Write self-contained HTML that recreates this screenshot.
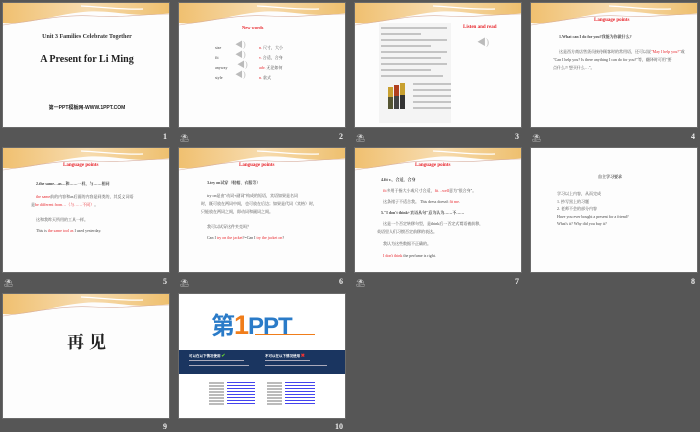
<!DOCTYPE html>
<html><head><meta charset="utf-8"><style>
*{margin:0;padding:0;box-sizing:border-box}
body{width:700px;height:432px;background:#565656;position:relative;overflow:hidden;font-family:"Liberation Serif","Noto Serif CJK SC",serif}
.s{position:absolute;width:168px;height:126px;background:#fdfdfd;overflow:hidden;border:1px solid #6a6a6a}
.s svg.w{position:absolute;left:0;top:0}
.n{position:absolute;color:#eee;font:bold 8px "Liberation Serif",serif}
.st{position:absolute;color:#ccc;font:7px "Noto Sans CJK SC",sans-serif}
.a{position:absolute;white-space:nowrap}
.r{color:#e8252b}
.t{font-size:4px;color:#444}
.ln{position:absolute;height:2px;background:#c4c4c4}
</style></head><body>
<svg width="0" height="0" style="position:absolute"><defs>
<linearGradient id="g" x1="0" x2="1"><stop offset="0" stop-color="#f0c070"/><stop offset=".5" stop-color="#f7dcb0"/><stop offset="1" stop-color="#eebf6d"/></linearGradient>
<symbol id="wv" viewBox="0 0 168 126"><path d="M0 0H168V10C130 16 110 6 80 9C50 12 25 22 0 20Z" fill="url(#g)"/><path d="M0 22C30 18 60 11 90 13C120 15 140 11 168 11" stroke="#d8b0a0" stroke-width=".6" fill="none"/><path d="M78 3C100 4 118 7 140 6" stroke="#fff" stroke-width="1.2" fill="none"/></symbol>
</defs></svg>

<div class="s" style="left:2px;top:2px"><svg class="w" width="168" height="126"><use href="#wv"/></svg>
<div class="a" style="left:0;width:168px;text-align:center;top:31px;font-size:6px;font-weight:bold;color:#333">Unit 3 Families Celebrate Together</div>
<div class="a" style="left:0;width:168px;text-align:center;top:51px;font-size:10px;font-weight:bold;color:#222">A Present for Li Ming</div>
<div class="a" style="left:0;width:168px;text-align:center;top:101px;font:bold 5px 'Liberation Sans','Noto Sans CJK SC',sans-serif;color:#222">第一PPT模板网-WWW.1PPT.COM</div></div>
<div class="n" style="left:163px;top:132px">1</div>

<div class="s" style="left:178px;top:2px"><svg class="w" width="168" height="126"><use href="#wv"/></svg>
<div class="a r" style="left:63px;top:22px;font-size:4.5px;font-weight:bold">New words</div>
<div class="a t" style="left:36px;top:40px;line-height:10px">size<br>fit<br>anyway<br>style</div>
<div class="a" style="left:56px;top:37px;color:#bbb;font-size:8px;line-height:10px">◀)<br>◀)<br>&nbsp;◀)<br>◀)</div>
<div class="a t" style="left:80px;top:40px;line-height:10px"><span class="r">n.</span> 尺寸，大小<br><span class="r">v.</span> 合适，合身<br><span class="r">adv.</span> 无论如何<br><span class="r">n.</span> 款式</div></div>
<div class="st" style="left:180px;top:133px">⛱</div><div class="n" style="left:339px;top:132px">2</div>

<div class="s" style="left:354px;top:2px"><svg class="w" width="168" height="126"><use href="#wv"/></svg>
<div class="a" style="left:24px;top:20px;width:72px;height:100px;background:#f4f4f4"></div>
<div class="ln" style="left:26px;top:24px;width:66px"></div><div class="ln" style="left:26px;top:30px;width:40px"></div>
<div class="ln" style="left:26px;top:36px;width:66px"></div><div class="ln" style="left:26px;top:42px;width:50px"></div>
<div class="ln" style="left:26px;top:48px;width:66px"></div><div class="ln" style="left:26px;top:54px;width:60px"></div>
<div class="ln" style="left:26px;top:60px;width:66px"></div><div class="ln" style="left:26px;top:66px;width:50px"></div>
<div class="ln" style="left:26px;top:72px;width:62px"></div>
<div class="ln" style="left:58px;top:80px;width:38px"></div><div class="ln" style="left:58px;top:86px;width:38px"></div><div class="ln" style="left:58px;top:92px;width:38px"></div><div class="ln" style="left:58px;top:98px;width:38px"></div><div class="ln" style="left:58px;top:104px;width:38px"></div>
<svg class="a" style="left:30px;top:78px" width="24" height="30"><rect x="3" y="6" width="5" height="10" fill="#c8a030"/><rect x="9" y="4" width="5" height="11" fill="#b04020"/><rect x="15" y="2" width="5" height="12" fill="#c8a030"/><rect x="3" y="16" width="5" height="12" fill="#553"/><rect x="9" y="15" width="5" height="13" fill="#444"/><rect x="15" y="14" width="5" height="14" fill="#333"/></svg>
<div class="a r" style="left:108px;top:22px;font-size:5px;font-weight:bold">Listen and read</div>
<div class="a" style="left:122px;top:32px;color:#bbb;font-size:9px">◀)</div></div>
<div class="st" style="left:356px;top:133px">⛱</div><div class="n" style="left:515px;top:132px">3</div>

<div class="s" style="left:530px;top:2px"><svg class="w" width="168" height="126"><use href="#wv"/></svg>
<div class="a r" style="left:63px;top:15px;font-size:5px;font-weight:bold">Language points</div>
<div class="a t" style="left:28px;top:31px;font-weight:bold">1.What can I do for you?我能为你做什么?</div>
<div class="a t" style="left:28px;top:46px">这是西方商店售货员接待顾客时的常用语，还可以说<span class="r">"May I help you?"</span>或</div>
<div class="a t r" style="left:22px;top:54px">"Can I help you? Is there anything I can do for you?"<span style="color:#444">等，翻译时可用"要</span></div>
<div class="a t r" style="left:22px;top:62px">点什么?/ 想买什么…"。</div></div>
<div class="st" style="left:532px;top:133px">⛱</div><div class="n" style="left:691px;top:132px">4</div>

<div class="s" style="left:2px;top:147px"><svg class="w" width="168" height="126"><use href="#wv"/></svg>
<div class="a r" style="left:60px;top:15px;font-size:5px;font-weight:bold">Language points</div>
<div class="a t" style="left:33px;top:33px;font-weight:bold">2.the same…as…和……一样，与……相同</div>
<div class="a t" style="left:33px;top:46px"><span class="r">the same</span>前的内容和as后面的内容是同类的，其反义词语</div>
<div class="a t" style="left:28px;top:54px">是<span class="r">be different from…（与……不同）</span>。</div>
<div class="a t" style="left:33px;top:69px">这和我昨天所用的工具一样。</div>
<div class="a t" style="left:33px;top:80px">This is <span class="r">the same tool as</span> I used yesterday.</div></div>
<div class="st" style="left:4px;top:278px">⛱</div><div class="n" style="left:163px;top:277px">5</div>

<div class="s" style="left:178px;top:147px"><svg class="w" width="168" height="126"><use href="#wv"/></svg>
<div class="a r" style="left:60px;top:15px;font-size:5px;font-weight:bold">Language points</div>
<div class="a t" style="left:28px;top:32px;font-weight:bold">3.try on试穿（鞋帽、衣服等）</div>
<div class="a t r" style="left:28px;top:45px">try on是由"动词+副词"构成的短语，宾语如果是名词</div>
<div class="a t r" style="left:22px;top:53px">时，<span style="color:#444">既可放在两词中间，</span>也可放在后边；如果是代词（宾格）时，</div>
<div class="a t r" style="left:22px;top:61px">只能放在两词之间，即动词和副词之间。</div>
<div class="a t" style="left:28px;top:76px">我可以试穿这件夹克吗？</div>
<div class="a t" style="left:28px;top:87px">Can I <span class="r">try on the jacket</span>?=Can I <span class="r">try the jacket on</span>?</div></div>
<div class="st" style="left:180px;top:278px">⛱</div><div class="n" style="left:339px;top:277px">6</div>

<div class="s" style="left:354px;top:147px"><svg class="w" width="168" height="126"><use href="#wv"/></svg>
<div class="a r" style="left:60px;top:15px;font-size:5px;font-weight:bold">Language points</div>
<div class="a t" style="left:26px;top:29px;font-weight:bold">4.fit v.，合适，合身</div>
<div class="a t" style="left:28px;top:40px"><span class="r">fit</span>多用于指大小或尺寸合适，<span class="r">fit…well</span>意为"很合身"。</div>
<div class="a t" style="left:28px;top:51px">这条裙子不适合我。 This dress doesn't <span class="r">fit me</span>.</div>
<div class="a t" style="left:26px;top:62px;font-weight:bold">5."I don't think+宾语从句"意为认为……不……</div>
<div class="a t" style="left:28px;top:73px">这是一个否定转移句型，是think后一否定式谓语被前移，</div>
<div class="a t" style="left:22px;top:81px">英语里人们习惯否定前移的表达。</div>
<div class="a t" style="left:28px;top:93px">我认为这些数据不正确的。</div>
<div class="a t" style="left:28px;top:105px"><span class="r">I don't think</span> the perfume is right.</div></div>
<div class="st" style="left:356px;top:278px">⛱</div><div class="n" style="left:515px;top:277px">7</div>

<div class="s" style="left:530px;top:147px">
<div class="a t" style="left:67px;top:26px;font-weight:bold">自主学习要求</div>
<div class="a t" style="left:26px;top:42px;line-height:7.5px">学习以上内容，从而完成<br>1. 抄写黑上的习题<br>2. 老师不会的部分内容<br>Have you ever bought a present for a friend?<br>What's it? Why did you buy it?</div></div>
<div class="n" style="left:691px;top:277px">8</div>

<div class="s" style="left:2px;top:293px"><svg class="w" width="168" height="126"><use href="#wv"/></svg>
<div class="a" style="left:64px;top:34px;font:bold 17px 'Noto Serif CJK SC',serif;color:#222;letter-spacing:5px">再见</div></div>
<div class="n" style="left:163px;top:422px">9</div>

<div class="s" style="left:178px;top:293px;background:#fff">
<div class="a" style="left:32px;top:12px;font:bold 24px 'Liberation Sans','Noto Sans CJK SC',sans-serif;color:#2a7bc8;letter-spacing:-1px">第<span style="color:#f07d1a;font-size:27px">1</span>PPT</div>
<div class="a" style="left:76px;top:40px;width:60px;height:1px;background:#f07d1a"></div>
<div class="a" style="left:0;top:56px;width:168px;height:24px;background:#1a3560"></div>
<div class="a" style="left:10px;top:58px;font:bold 3.5px 'Noto Sans CJK SC',sans-serif;color:#fff">可以在以下情况使用 <span style="color:#6c3;font-size:5px">✔</span></div>
<div class="a" style="left:86px;top:58px;font:bold 3.5px 'Noto Sans CJK SC',sans-serif;color:#fff">不可以在以下情况使用 <span style="color:#e33;font-size:5px">✖</span></div>
<div class="ln" style="left:10px;top:66px;width:55px;height:1px;background:#aab"></div><div class="ln" style="left:10px;top:71px;width:60px;height:1px;background:#aab"></div>
<div class="ln" style="left:86px;top:66px;width:45px;height:1px;background:#aab"></div><div class="ln" style="left:86px;top:71px;width:62px;height:1px;background:#aab"></div>
<div class="a" style="left:30px;top:88px;width:15px;height:24px;background:repeating-linear-gradient(#bbb 0 2px,#fff 2px 3px)"></div>
<div class="a" style="left:48px;top:88px;width:28px;height:24px;background:repeating-linear-gradient(#44e 0 1px,#fff 1px 3px)"></div>
<div class="a" style="left:88px;top:88px;width:15px;height:24px;background:repeating-linear-gradient(#bbb 0 2px,#fff 2px 3px)"></div>
<div class="a" style="left:106px;top:88px;width:30px;height:24px;background:repeating-linear-gradient(#44e 0 1px,#fff 1px 3px)"></div></div>
<div class="n" style="left:335px;top:422px">10</div>
</body></html>
